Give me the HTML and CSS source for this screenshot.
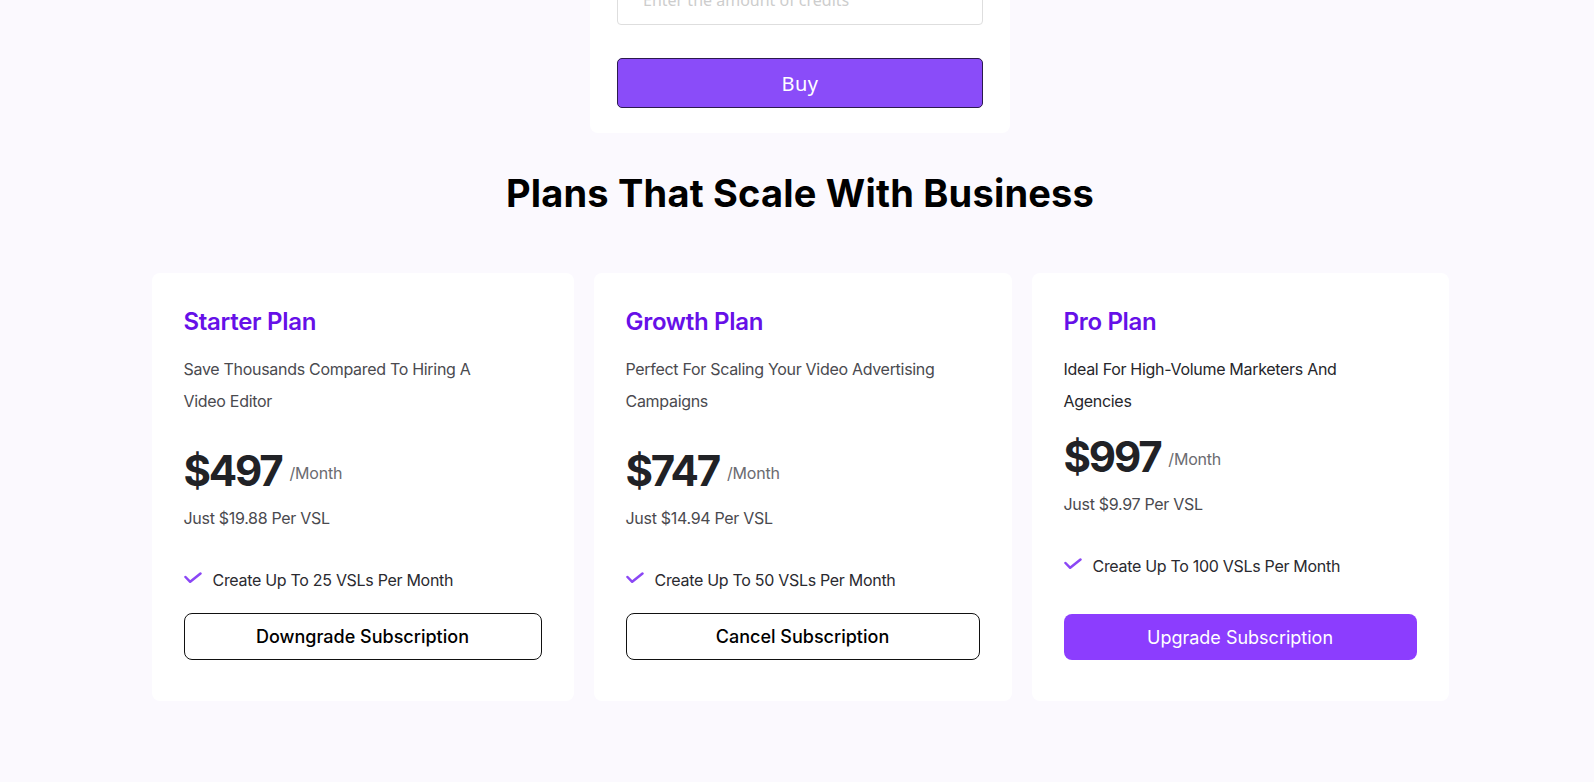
FILE: index.html
```html
<!DOCTYPE html>
<html lang="en">
<head>
<meta charset="utf-8">
<title>Plans</title>
<link rel="stylesheet" href="styles.css">
</head>
<body>
<div class="page">
  <section class="credits">
    <input class="credits__input" type="text" placeholder="Enter the amount of credits">
    <button class="credits__buy" type="button">Buy</button>
  </section>

  <h2 class="section-title">Plans That Scale With Business</h2>

  <div class="plans">
    <article class="plan">
      <h3 class="plan__name">Starter Plan</h3>
      <p class="plan__desc">Save Thousands Compared To Hiring A<br>Video Editor</p>
      <div class="plan__price">$497<span class="plan__period">/Month</span></div>
      <p class="plan__per">Just $19.88 Per VSL</p>
      <ul class="plan__features">
        <li class="plan__feature"><svg class="check" viewBox="0 0 18 12" width="18" height="12"><path d="M1.5 5 L6.2 9.8 L16.5 1.5" fill="none" stroke="currentColor" stroke-width="2.5" stroke-linecap="round" stroke-linejoin="round"/></svg>Create Up To 25 VSLs Per Month</li>
      </ul>
      <button class="plan__btn plan__btn--outline" type="button">Downgrade Subscription</button>
    </article>

    <article class="plan">
      <h3 class="plan__name">Growth Plan</h3>
      <p class="plan__desc">Perfect For Scaling Your Video Advertising<br>Campaigns</p>
      <div class="plan__price">$747<span class="plan__period">/Month</span></div>
      <p class="plan__per">Just $14.94 Per VSL</p>
      <ul class="plan__features">
        <li class="plan__feature"><svg class="check" viewBox="0 0 18 12" width="18" height="12"><path d="M1.5 5 L6.2 9.8 L16.5 1.5" fill="none" stroke="currentColor" stroke-width="2.5" stroke-linecap="round" stroke-linejoin="round"/></svg>Create Up To 50 VSLs Per Month</li>
      </ul>
      <button class="plan__btn plan__btn--outline" type="button">Cancel Subscription</button>
    </article>

    <article class="plan plan--current">
      <h3 class="plan__name">Pro Plan</h3>
      <p class="plan__desc plan__desc--dark">Ideal For High-Volume Marketers And<br>Agencies</p>
      <div class="plan__price">$997<span class="plan__period">/Month</span></div>
      <p class="plan__per">Just $9.97 Per VSL</p>
      <ul class="plan__features">
        <li class="plan__feature"><svg class="check" viewBox="0 0 18 12" width="18" height="12"><path d="M1.5 5 L6.2 9.8 L16.5 1.5" fill="none" stroke="currentColor" stroke-width="2.5" stroke-linecap="round" stroke-linejoin="round"/></svg>Create Up To 100 VSLs Per Month</li>
      </ul>
      <button class="plan__btn plan__btn--solid" type="button">Upgrade Subscription</button>
    </article>
  </div>
</div>
</body>
</html>
```

FILE: styles.css
```css
* { box-sizing: border-box; }

html, body {
  margin: 0;
  padding: 0;
}

body {
  background: #fbf9fe;
  font-family: "Inter", "Noto Sans", sans-serif;
  color: #222;
  overflow: hidden;
}

.page {
  padding-left: 6px;
  display: flex;
  flex-direction: column;
  align-items: center;
}

/* credits card (scrolled partly out of view) */
.credits {
  width: 420px;
  margin-top: -52px;
  background: #fff;
  border-radius: 8px;
  padding: 27px 27px 25px;
  display: flex;
  flex-direction: column;
  gap: 33px;
}

.credits__input {
  height: 50px;
  width: 100%;
  border: 1px solid #dedede;
  border-radius: 4px;
  padding: 0 25px;
  font-family: "Noto Sans", "Inter", sans-serif;
  font-size: 16px;
  color: #333;
  background: #fff;
}

.credits__input::placeholder { color: #cdcdcd; }

.credits__buy {
  height: 50px;
  width: 100%;
  background: #8a4cf9;
  border: 1px solid #2c1a4d;
  border-radius: 5px;
  color: #fff;
  font-family: "Noto Sans", "Inter", sans-serif;
  font-size: 20px;
  font-weight: 400;
  letter-spacing: 0.4px;
  cursor: pointer;
}

.section-title {
  margin: 37px 0 0;
  font-family: "Inter", "Noto Sans", sans-serif;
  font-weight: 700;
  font-size: 38px;
  line-height: 46px;
  color: #000;
  letter-spacing: 0.2px;
}

/* plans */
.plans {
  margin-top: 57px;
  display: grid;
  grid-template-columns: 422px 418px 417px;
  gap: 20px;
}

.plan {
  background: #fff;
  border-radius: 8px;
  height: 428px;
  padding: 34px 32px 41px;
  display: flex;
  flex-direction: column;
}

.plan__name {
  margin: 0;
  font-size: 24px;
  line-height: 30px;
  font-weight: 600;
  color: #6610e8;
  letter-spacing: -0.3px;
}

.plan__desc {
  margin: 16px 0 0;
  font-size: 16px;
  line-height: 32px;
  color: #4a4a4f;
  letter-spacing: -0.3px;
}

.plan__desc--dark { color: #26262b; }

.plan__price {
  margin-top: 32px;
  font-size: 42px;
  line-height: 44px;
  font-weight: 700;
  color: #212226;
  letter-spacing: -2.2px;
}

.plan--current .plan__price { margin-top: 18px; }

.plan__period {
  margin-left: 8px;
  font-size: 16px;
  font-weight: 400;
  color: #6b6b70;
  vertical-align: 7px;
  letter-spacing: -0.2px;
}

.plan__per {
  margin: 11px 0 0;
  font-size: 16px;
  line-height: 24px;
  color: #4a4a4f;
  letter-spacing: -0.3px;
}

.plan__features {
  list-style: none;
  margin: 38px 0 0;
  padding: 0;
}

.plan__feature {
  display: flex;
  align-items: center;
  gap: 11px;
  font-size: 16px;
  line-height: 24px;
  color: #2a2a30;
  letter-spacing: -0.3px;
}

.check {
  color: #8b47f5;
  flex: none;
  position: relative;
  top: -2px;
}

.plan__btn {
  margin-top: auto;
  width: 100%;
  height: 47px;
  border-radius: 8px;
  font-family: "Inter", "Noto Sans", sans-serif;
  font-size: 18px;
  font-weight: 500;
  letter-spacing: 0;
  cursor: pointer;
}

.plan__btn--outline {
  background: #fff;
  border: 1px solid #111;
  color: #000;
}

.plan__btn--solid {
  background: #8c3dfe;
  border: none;
  color: #fff;
  font-weight: 400;
  height: 46px;
}
```
